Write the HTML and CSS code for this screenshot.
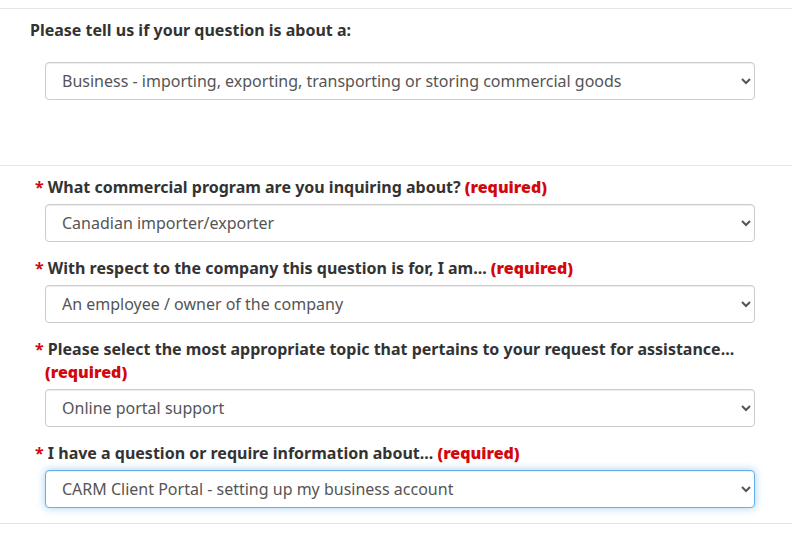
FILE: index.html
```html
<!DOCTYPE html>
<html lang="en">
<head>
<meta charset="utf-8">
<link rel="stylesheet" href="styles.css">
</head>
<body>
<div class="page">
  <section class="section section-type">
    <label class="label-plain" for="type">Please tell us if your question is about a:</label>
    <select class="form-control" id="type">
      <option>Business - importing, exporting, transporting or storing commercial goods</option>
    </select>
  </section>
  <section class="section section-details">
    <div class="form-group">
      <label class="label-req" for="q1"><span class="star">*</span> What commercial program are you inquiring about? <strong class="required">(required)</strong></label>
      <select class="form-control" id="q1"><option>Canadian importer/exporter</option></select>
    </div>
    <div class="form-group">
      <label class="label-req" for="q2"><span class="star">*</span> With respect to the company this question is for, I am... <strong class="required">(required)</strong></label>
      <select class="form-control" id="q2"><option>An employee / owner of the company</option></select>
    </div>
    <div class="form-group">
      <label class="label-req" for="q3"><span class="star">*</span> Please select the most appropriate topic that pertains to your request for assistance... <strong class="required">(required)</strong></label>
      <select class="form-control" id="q3"><option>Online portal support</option></select>
    </div>
    <div class="form-group">
      <label class="label-req" for="q4"><span class="star">*</span> I have a question or require information about... <strong class="required">(required)</strong></label>
      <select class="form-control is-focused" id="q4"><option>CARM Client Portal - setting up my business account</option></select>
    </div>
  </section>
  <div class="section-end"></div>
</div>
</body>
</html>
```
FILE: styles.css
```css
html, body {
  margin: 0;
  padding: 0;
  background: #fff;
}
body {
  font-family: "Noto Sans", "Open Sans", "DejaVu Sans", sans-serif;
  font-size: 16px;
  color: #333;
}
.page {
  padding-top: 8px;
}
.section {
  border-top: 1px solid #e5e5e5;
  padding: 10px 37px 0 30px;
}
.section-type {
  padding-bottom: 65px;
}
.label-plain {
  display: block;
  font-weight: 700;
  line-height: 23px;
  margin-bottom: 20px;
}
.form-group {
  margin-bottom: 15px;
}
.label-req {
  display: block;
  font-weight: 700;
  line-height: 23px;
  margin-bottom: 5px;
  padding-left: 15px;
  text-indent: -10px;
}
.star {
  color: #d3080c;
}
.required {
  color: #d3080c;
}
.form-control {
  display: block;
  box-sizing: border-box;
  margin-left: 15px;
  width: calc(100% - 15px);
  height: 38px;
  padding: 6px 12px;
  font-family: inherit;
  font-size: 16px;
  color: #555;
  background-color: #fff;
  border: 1px solid #ccc;
  border-radius: 4px;
  box-shadow: inset 0 1px 1px rgba(0,0,0,.075);
}
.form-control.is-focused {
  border-color: #66afe9;
  outline: 0;
  box-shadow: inset 0 1px 1px rgba(0,0,0,.075), 0 0 8px rgba(102,175,233,.6);
}
.section-end {
  border-top: 1px solid #e5e5e5;
  height: 19px;
}
```
